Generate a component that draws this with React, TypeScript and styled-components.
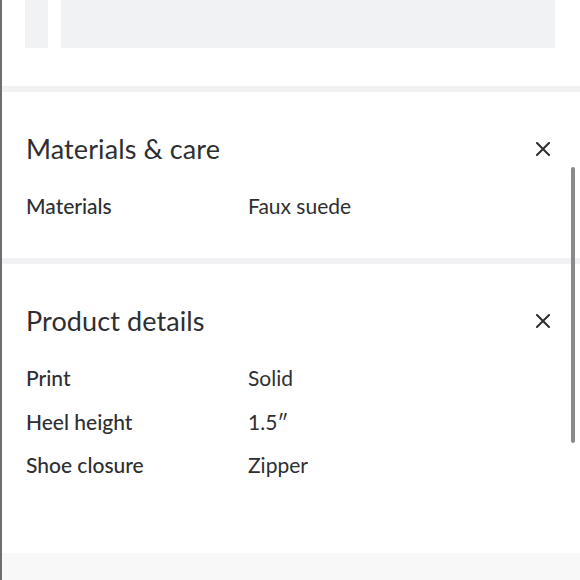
import React from "react";
import styled, { createGlobalStyle } from "styled-components";

const GlobalStyle = createGlobalStyle`
  html, body {
    margin: 0;
    padding: 0;
    background: #fff;
  }
  body {
    font-family: Lato, "Open Sans", sans-serif;
    color: #2e2f32;
  }
`;

const Page = styled.div`
  position: relative;
  width: 580px;
  height: 580px;
  overflow: hidden;
  box-sizing: border-box;
  border-left: 2px solid #6e6e6e;
  display: flex;
  flex-direction: column;
`;

const Gallery = styled.div`
  display: flex;
  gap: 13px;
  height: 86px;
  padding-left: 23px;
  flex-shrink: 0;
`;

const Thumb = styled.div<{ $width: number }>`
  width: ${(p) => p.$width}px;
  height: 48px;
  background: #f1f2f4;
`;

const Divider = styled.div`
  height: 6px;
  background: #f1f1f3;
  flex-shrink: 0;
`;

const Section = styled.section<{ $bottom: number }>`
  padding: 41px 30px ${(p) => p.$bottom}px 24px;
  flex-shrink: 0;
`;

const Header = styled.div`
  display: flex;
  align-items: center;
  justify-content: space-between;
  margin-bottom: 29px;
`;

const Title = styled.h2`
  margin: 0;
  font-size: 27px;
  line-height: 32px;
  font-weight: 400;
  letter-spacing: 0.1px;
`;

const CloseButton = styled.button`
  border: 0;
  background: none;
  padding: 0;
  width: 14px;
  height: 14px;
  display: flex;
  color: #2e2f32;
  cursor: pointer;
`;

const Specs = styled.dl`
  margin: 0;
  display: grid;
  grid-template-columns: 222px 1fr;
  row-gap: 19.5px;
`;

const Label = styled.dt`
  font-size: 21px;
  line-height: 24px;
  font-weight: 500;
`;

const Value = styled.dd`
  margin: 0;
  font-size: 21px;
  line-height: 24px;
  font-weight: 400;
`;

const Footer = styled.div`
  flex: 1;
  background: #f8f8f8;
`;

const Scrollbar = styled.div`
  position: absolute;
  left: 569px;
  top: 167px;
  width: 4px;
  height: 276px;
  border-radius: 2px;
  background: #8a8a8a;
`;

const CloseIcon = () => (
  <svg width="14" height="14" viewBox="0 0 14 14" fill="none">
    <path d="M1 1L13 13M13 1L1 13" stroke="currentColor" strokeWidth="2" strokeLinecap="square" />
  </svg>
);

type Spec = [string, string];

const DetailSection = ({ title, specs, bottom }: { title: string; specs: Spec[]; bottom: number }) => (
  <Section $bottom={bottom}>
    <Header>
      <Title>{title}</Title>
      <CloseButton aria-label="Close">
        <CloseIcon />
      </CloseButton>
    </Header>
    <Specs>
      {specs.map(([k, v]) => (
        <React.Fragment key={k}>
          <Label>{k}</Label>
          <Value>{v}</Value>
        </React.Fragment>
      ))}
    </Specs>
  </Section>
);

export default function App() {
  return (
    <>
      <GlobalStyle />
      <Page>
        <Gallery>
          <Thumb $width={23} />
          <Thumb $width={494} />
        </Gallery>
        <Divider />
        <DetailSection title="Materials & care" specs={[["Materials", "Faux suede"]]} bottom={40} />
        <Divider />
        <DetailSection
          title="Product details"
          specs={[
            ["Print", "Solid"],
            ["Heel height", "1.5\u2033"],
            ["Shoe closure", "Zipper"],
          ]}
          bottom={76}
        />
        <Footer />
        <Scrollbar />
      </Page>
    </>
  );
}
